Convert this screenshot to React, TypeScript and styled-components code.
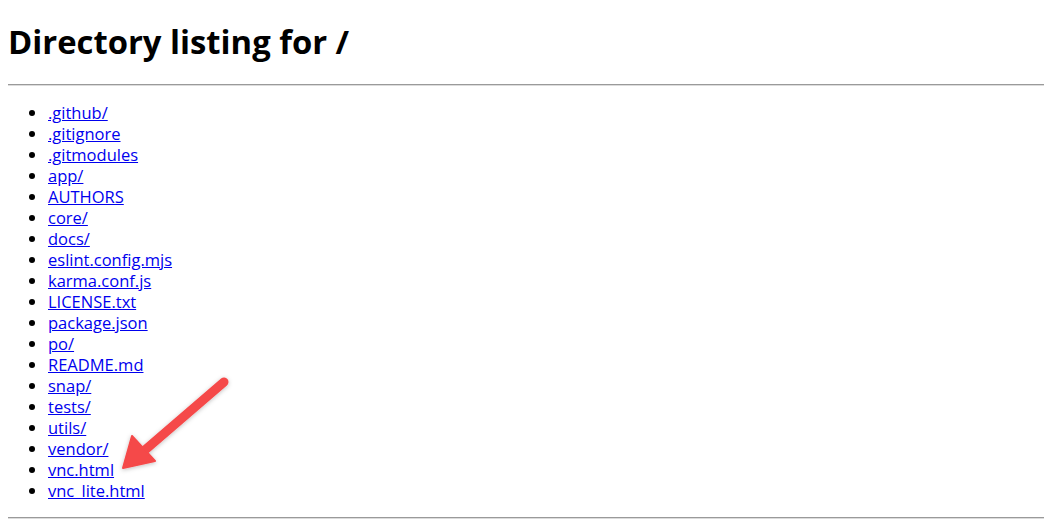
import styled, { createGlobalStyle } from 'styled-components'

const GlobalStyle = createGlobalStyle`
  html, body {
    margin: 0;
    padding: 0;
    background: #fff;
  }
  body {
    font-family: "Open Sans", "Noto Sans", sans-serif;
    font-size: 16px;
    color: #000;
  }
`

// the capture is cut off on the right, so the rules run to the window edge
const Page = styled.div`
  position: relative;
  display: flow-root;
  padding: 0 0 0 8px;
`

const Title = styled.h1`
  font-size: 32.8px;
  line-height: 42px;
  font-weight: 700;
  margin: 21px 0;
`

const Rule = styled.hr`
  border: none;
  border-top: 1px solid #9a9a9a;
  border-bottom: 1px solid #dcdcdc;
  margin: 8px 0;
  height: 0;
`

const List = styled.ul`
  margin: 16px 0;
  padding-left: 40px;
  list-style: disc;
`

const Item = styled.li`
  line-height: 21px;
  font-size: 16.5px;
`

const FileLink = styled.a`
  color: #0000ee;
  text-decoration: underline;
`

const Annotation = styled.svg`
  position: absolute;
  left: 0;
  top: 0;
  pointer-events: none;
  overflow: visible;
`

const files = [
  '.github/',
  '.gitignore',
  '.gitmodules',
  'app/',
  'AUTHORS',
  'core/',
  'docs/',
  'eslint.config.mjs',
  'karma.conf.js',
  'LICENSE.txt',
  'package.json',
  'po/',
  'README.md',
  'snap/',
  'tests/',
  'utils/',
  'vendor/',
  'vnc.html',
  'vnc_lite.html',
]

export default function App() {
  return (
    <Page>
      <GlobalStyle />
      <Title>Directory listing for /</Title>
      <Rule />
      <List>
        {files.map((f) => (
          <Item key={f}>
            <FileLink href={f}>{f}</FileLink>
          </Item>
        ))}
      </List>
      <Rule />
      <Annotation width="1044" height="531" viewBox="0 0 1044 531">
        <defs>
          <filter id="shadow" x="-20%" y="-20%" width="140%" height="140%">
            <feDropShadow dx="0" dy="1" stdDeviation="2" floodColor="#000" floodOpacity="0.25" />
          </filter>
        </defs>
        <g filter="url(#shadow)" fill="#f54848" stroke="#f54848">
          <line x1="224" y1="382" x2="145" y2="450" strokeWidth="9" strokeLinecap="round" />
          <polygon points="123,468 132,436 155,461" strokeWidth="2" strokeLinejoin="round" />
        </g>
      </Annotation>
    </Page>
  )
}
